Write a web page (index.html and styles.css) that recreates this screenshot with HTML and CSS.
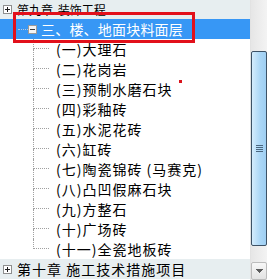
FILE: index.html
```html
<!DOCTYPE html>
<html lang="zh-CN">
<head>
  <meta charset="UTF-8">
  <meta name="viewport" content="width=device-width, initial-scale=1.0">
  <title>定额章节</title>
  <link rel="stylesheet" href="styles.css">
</head>
<body>

  <div class="panel">
    <div class="tree">
      <!-- chapter nine, scrolled partly out of view -->
      <div class="node chapter first">
        <svg class="toggle" width="9" height="9" viewBox="0 0 9 9" shape-rendering="crispEdges">
          <rect x="0.5" y="0.5" width="8" height="8" fill="#fff" stroke="#8e8f8f"/>
          <path d="M2 4.5h5M4.5 2v5" stroke="#1e1e1e"/>
        </svg>
        <span class="label">第九章 装饰工程</span>
      </div>

      <!-- selected section -->
      <div class="node section selected">
        <span class="stub"></span>
        <svg class="toggle" width="9" height="9" viewBox="0 0 9 9" shape-rendering="crispEdges">
          <rect x="0.5" y="0.5" width="8" height="8" fill="#f4f4f4" stroke="#9a9a9a"/>
          <path d="M2 4.5h5" stroke="#3a3a3a"/>
        </svg>
        <span class="label">三、楼、地面块料面层</span>
      </div>

      <ul class="items">
        <li><span class="branch"></span><span class="label">(一)大理石</span></li>
        <li><span class="branch"></span><span class="label">(二)花岗岩</span></li>
        <li><span class="branch"></span><span class="label">(三)预制水磨石块</span></li>
        <li><span class="branch"></span><span class="label">(四)彩釉砖</span></li>
        <li><span class="branch"></span><span class="label">(五)水泥花砖</span></li>
        <li><span class="branch"></span><span class="label">(六)缸砖</span></li>
        <li><span class="branch"></span><span class="label">(七)陶瓷锦砖 (马赛克)</span></li>
        <li><span class="branch"></span><span class="label">(八)凸凹假麻石块</span></li>
        <li><span class="branch"></span><span class="label">(九)方整石</span></li>
        <li><span class="branch"></span><span class="label">(十)广场砖</span></li>
        <li class="last"><span class="branch"></span><span class="label">(十一)全瓷地板砖</span></li>
      </ul>

      <div class="node chapter">
        <svg class="toggle" width="9" height="9" viewBox="0 0 9 9" shape-rendering="crispEdges">
          <rect x="0.5" y="0.5" width="8" height="8" fill="#fff" stroke="#8e8f8f"/>
          <path d="M2 4.5h5M4.5 2v5" stroke="#1e1e1e"/>
        </svg>
        <span class="label">第十章 施工技术措施项目</span>
      </div>
    </div>

    <div class="scrollbar">
      <div class="track"></div>
      <div class="thumb">
        <span class="grip"></span>
      </div>
      <div class="track short"></div>
      <div class="arrow">
        <svg width="7" height="4" viewBox="0 0 7 4" shape-rendering="crispEdges">
          <path d="M0 0h7v1H0zM1 1h5v1H1zM2 2h3v1H2zM3 3h1v1H3z" fill="#5c5c5c"/>
        </svg>
      </div>
    </div>
  </div>

  <!-- annotation drawn over the screenshot -->
  <div class="callout"></div>
  <div class="dot"></div>

</body>
</html>
```

FILE: styles.css
```css
html, body {
  margin: 0;
  padding: 0;
  background: #fff;
}
body {
  position: relative;
  width: 271px;
  height: 280px;
  overflow: hidden;
  font-family: "Noto Sans CJK SC", "Noto Sans", sans-serif;
  color: #000;
}
.panel {
  display: flex;
  height: 280px;
  padding-right: 4px;
}
.tree {
  flex: 1;
  margin-top: -1px;
}
.node {
  display: flex;
  align-items: center;
  height: 20px;
  font-size: 14px;
  white-space: nowrap;
}
.toggle {
  flex: none;
  display: block;
}
.chapter {
  background: #e7eef0;
  padding-left: 3px;
  letter-spacing: 1px;
}
.chapter.first {
  font-size: 12px;
  letter-spacing: 0;
  word-spacing: 2px;
}
.chapter .label {
  margin-left: 5px;
}
.section {
  padding-left: 18px;
  letter-spacing: 0.2px;
}
.section .stub {
  width: 10px;
  border-top: 1px dotted #b9c9dc;
}
.section .label {
  margin-left: 4px;
}
.selected {
  background: #3797f5;
  color: #fff;
}
.items {
  list-style: none;
  margin: 0;
  padding: 0;
}
.items li {
  display: flex;
  align-items: center;
  height: 20px;
  padding-left: 33px;
  font-size: 14px;
  letter-spacing: 1px;
  white-space: nowrap;
}
.branch {
  display: flex;
  flex-direction: column;
  width: 16px;
  height: 20px;
}
.branch::before {
  content: "";
  height: 9px;
  border-left: 1px dotted #a0a0a0;
  border-bottom: 1px dotted #a0a0a0;
}
.branch::after {
  content: "";
  flex: 1;
  border-left: 1px dotted #a0a0a0;
}
.items li.last .branch::after {
  border-left-color: transparent;
}
.items .label {
  margin-left: 7px;
}
.scrollbar {
  width: 17px;
  display: flex;
  flex-direction: column;
  background: #ececec;
  border-left: 1px solid #e2e2e2;
  box-sizing: border-box;
}
.track {
  height: 51px;
  background: linear-gradient(to right, #e6e6e6, #f3f3f3);
}
.track.short {
  height: 16px;
}
.thumb {
  flex: 1;
  display: flex;
  align-items: center;
  justify-content: center;
  border: 1px solid #3d5266;
  border-radius: 2px;
  background: linear-gradient(to right, #d4ecfc, #aad6f6 60%, #9fcff3);
}
.grip {
  width: 7px;
  height: 7px;
  background: repeating-linear-gradient(to bottom, #4b6780 0 1px, transparent 1px 2px);
}
.arrow {
  height: 16px;
  display: flex;
  align-items: center;
  justify-content: center;
  background: linear-gradient(to bottom, #f7f7f7, #e3e3e3);
  border: 1px solid #bcbcbc;
  border-radius: 2px;
}
.callout {
  position: absolute;
  left: 13px;
  top: 12px;
  width: 182px;
  height: 31px;
  border: 3px solid #e2101b;
  box-sizing: border-box;
}
.dot {
  position: absolute;
  left: 179px;
  top: 80px;
  width: 3px;
  height: 3px;
  background: #d9141c;
}
```
